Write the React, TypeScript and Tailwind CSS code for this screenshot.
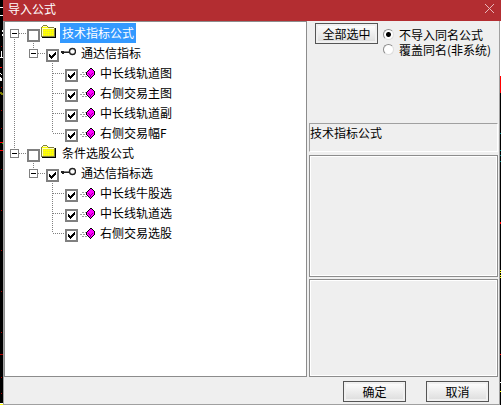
import React, { useState } from 'react';

type NodeKind = 'folder' | 'group' | 'formula';

interface TreeRow {
  id: string;
  label: string;
  kind: NodeKind;
  checked: boolean;
  // guide lines drawn left of the checkbox, one per level
  guides: GuideType[];
}

type GuideType = 'none' | 'line' | 'tee' | 'end' | 'first' | 'last' | 'only';

const ROWS: TreeRow[] = [
  { id: 'tech', label: '技术指标公式', kind: 'folder', checked: false, guides: ['first'] },
  { id: 'tech-tdx', label: '通达信指标', kind: 'group', checked: true, guides: ['line', 'only'] },
  { id: 'tech-1', label: '中长线轨道图', kind: 'formula', checked: true, guides: ['line', 'none', 'tee'] },
  { id: 'tech-2', label: '右侧交易主图', kind: 'formula', checked: true, guides: ['line', 'none', 'tee'] },
  { id: 'tech-3', label: '中长线轨道副', kind: 'formula', checked: true, guides: ['line', 'none', 'tee'] },
  { id: 'tech-4', label: '右侧交易幅F', kind: 'formula', checked: true, guides: ['line', 'none', 'end'] },
  { id: 'cond', label: '条件选股公式', kind: 'folder', checked: false, guides: ['last'] },
  { id: 'cond-tdx', label: '通达信指标选', kind: 'group', checked: true, guides: ['none', 'only'] },
  { id: 'cond-1', label: '中长线牛股选', kind: 'formula', checked: true, guides: ['none', 'none', 'tee'] },
  { id: 'cond-2', label: '中长线轨道选', kind: 'formula', checked: true, guides: ['none', 'none', 'tee'] },
  { id: 'cond-3', label: '右侧交易选股', kind: 'formula', checked: true, guides: ['none', 'none', 'end'] },
];

function Guide({ type }: { type: GuideType }) {
  const isExpander = type === 'first' || type === 'last' || type === 'only';
  const isBranch = isExpander || type === 'tee' || type === 'end';
  const hasTop = type !== 'none' && type !== 'first';
  const hasBottom = type === 'line' || type === 'tee' || type === 'first';

  const drawing = (
    <svg
      width={isBranch ? 22 : 19}
      height="20"
      shapeRendering="crispEdges"
      stroke="#808080"
      fill="none"
      className="block shrink-0"
    >
      {hasTop && <path d="M9.5 0V10" strokeDasharray="1 1" />}
      {hasBottom && <path d="M9.5 10V20" strokeDasharray="1 1" />}
      {isBranch && <path d="M10 10.5H21" strokeDasharray="1 1" />}
      {isExpander && (
        <>
          <rect x="5.5" y="6.5" width="8" height="8" fill="#fff" />
          <path d="M7 10.5H12" stroke="#000" />
        </>
      )}
    </svg>
  );

  if (isExpander) {
    return (
      <button type="button" aria-label="折叠" className="shrink-0">
        {drawing}
      </button>
    );
  }
  return drawing;
}

function FolderIcon() {
  return (
    <svg width="16" height="16" shapeRendering="crispEdges" className="block shrink-0">
      <path d="M2 0H6V1H7V2H13V3H14V12H0V2H1V1H2Z" fill="#808040" />
      <path d="M2 1H6V2H7V3H13V11H1V2H2Z" fill="#ffff00" />
      <path d="M2 4.5H13M2 6.5H13M2 8.5H13M2 10.5H13" stroke="#e0e040" strokeDasharray="1 1" />
      <path d="M2 1H6V2H2ZM1 3H13V4H2V11H1Z" fill="#ffffc0" />
      <path d="M14 3H15V13H1V12H14Z" fill="#000" />
    </svg>
  );
}

function GroupIcon() {
  return (
    <svg width="16" height="16" fill="none" className="block shrink-0">
      <path d="M1 6H4V7H9V8H4V9H2V8H1Z" fill="#222" />
      <path d="M4 6.5H9" stroke="#888" />
      <circle cx="12.5" cy="6.5" r="3" stroke="#222" strokeWidth="1.4" />
    </svg>
  );
}

function FormulaIcon() {
  return (
    <svg width="16" height="16" shapeRendering="crispEdges" className="block shrink-0">
      <path d="M3 7.5H7M1 9.5H6M3 11.5H8" stroke="#a0a0a0" strokeDasharray="2 1" />
      <path
        d="M11 3H13V4H14V5H15V6H16V10H15V11H14V12H13V13H12V14H11V13H10V12H9V11H8V10H7V7H8V6H9V5H10V4H11Z"
        fill="#000"
      />
      <path d="M11 4H13V5H14V6H15V10H14V11H13V12H12V13H11V12H10V11H9V10H8V7H9V6H10V5H11Z" fill="#ff00ff" />
      <path d="M9 8H10V9H11V10H12V9H13V8H14V9H13V10H12V12H11V10H10V9H9Z" fill="#900090" />
    </svg>
  );
}

function NodeIcon({ kind }: { kind: NodeKind }) {
  if (kind === 'folder') return <FolderIcon />;
  if (kind === 'group') return <GroupIcon />;
  return <FormulaIcon />;
}

interface TreeItemProps {
  row: TreeRow;
  checked: boolean;
  selected: boolean;
  onToggle: () => void;
}

function TreeItem({ row, checked, selected, onToggle }: TreeItemProps) {
  return (
    <li className="flex h-5 items-center">
      {row.guides.map((type, i) => (
        <Guide key={i} type={type} />
      ))}
      <span className="mb-px mr-px grid shrink-0 self-end">
        <input
          type="checkbox"
          id={row.id}
          checked={checked}
          onChange={onToggle}
          className="col-start-1 row-start-1 size-[13px] appearance-none border-2 border-[#808080] bg-white"
        />
        {checked && (
          <svg width="13" height="13" shapeRendering="crispEdges" className="pointer-events-none col-start-1 row-start-1">
            <path d="M3 5H4V6H5V7H6V6H7V5H8V4H9V3H10V6H9V7H8V8H7V9H6V10H5V9H4V8H3Z" fill="#000" />
          </svg>
        )}
      </span>
      <NodeIcon kind={row.kind} />
      <label
        htmlFor={row.id}
        className={
          selected
            ? 'ml-[3px] whitespace-nowrap bg-[#3399ff] px-0.5 leading-5 text-white'
            : 'ml-[3px] whitespace-nowrap px-0.5 leading-5'
        }
      >
        {row.label}
      </label>
    </li>
  );
}

function ChartEdgeLeft() {
  return (
    <svg width="3" height="405" shapeRendering="crispEdges" className="block">
      <path d="M0 7h3v1H0zM0 15h3v1H0zM2 30h1v2H2zM2 34h1v2H2zM1 51h1v6h1v1H0v-1h1zM0 73h1v1H0zM1 74h1v1H1zM0 77h1v1h1v3H0zM0 403h3v1H0z" fill="#fff" />
      <path d="M0 67h2v1H0zM0 142h3v1H0zM0 150h3v1H0z" fill="#f00" />
      <path d="M1 46h1v1H1zM1 87h1v1H1zM1 110h1v1H1zM1 128h1v1H1zM1 169h1v1H1zM1 210h1v1H1zM1 250h1v1H1zM1 291h1v1H1zM1 332h1v1H1zM0 354h3v1H0zM1 377h1v1H1zM1 393h1v1H1z" fill="#b00000" />
      <path d="M0 92h2v1h1v2H1v-1H0z" fill="#808000" />
      <path d="M2 143h1v1H2z" fill="#0c0" />
      <path d="M0 404h3v1H0z" fill="#ff0" />
    </svg>
  );
}

function ChartEdgeRight() {
  return (
    <svg width="1" height="384" shapeRendering="crispEdges" className="block">
      <path d="M0 0h1v55H0zM0 361h1v1H0z" fill="#fff" />
      <path d="M0 55h1v17H0zM0 201h1v2H0zM0 333h1v1H0z" fill="#f00" />
      <path d="M0 112h1v1H0zM0 129h1v1H0zM0 134h1v1H0zM0 140h1v1H0z" fill="#008080" />
      <path d="M0 249h1v1H0zM0 251h1v1H0zM0 254h1v1H0zM0 256h1v1H0zM0 370h1v1H0z" fill="#ff0" />
    </svg>
  );
}

function DialogButton({ children, onClick }: { children: React.ReactNode; onClick?: () => void }) {
  return (
    <button
      type="button"
      onClick={onClick}
      className="h-[21px] w-[63px] shrink-0 border border-[#555] bg-linear-to-b from-white to-[#dcdcdc] text-center leading-[19px] shadow-[inset_0_0_0_2px_#f0f0f0]"
    >
      {children}
    </button>
  );
}

const RADIO_CLASS =
  'size-[11px] shrink-0 appearance-none rounded-full border border-[#8c8c8c] border-r-[#dddddd] border-b-[#dddddd] bg-white checked:bg-[radial-gradient(circle,#000_2px,#fff_3px)]';

export default function App() {
  const [checked, setChecked] = useState<Record<string, boolean>>(
    Object.fromEntries(ROWS.map((row) => [row.id, row.checked]))
  );
  const [mode, setMode] = useState('skip');

  const toggle = (id: string) => setChecked((prev) => ({ ...prev, [id]: !prev[id] }));
  const selectAll = () => setChecked(Object.fromEntries(ROWS.map((row) => [row.id, true])));

  return (
    <div className="flex min-h-screen bg-black font-['Noto_Sans_CJK_SC',sans-serif] text-[12px] text-black">
      <div className="w-[3px] shrink-0">
        <ChartEdgeLeft />
      </div>
      <div className="flex min-w-0 flex-1 flex-col">
        <header className="flex h-[21px] items-start justify-between bg-[#b32d31] pl-[5px] pr-[7px] text-white">
          <h1 className="leading-[18px]">导入公式</h1>
          <button type="button" aria-label="关闭" className="pt-1">
            <svg width="9" height="9" stroke="#e8b8ba" className="block">
              <path d="M0 0L9 9M9 0L0 9" />
            </svg>
          </button>
        </header>
        <div className="flex flex-1">
          <div className="flex min-w-0 flex-1 flex-col border-x border-b border-[#a0a0a0] bg-[#efefef]">
            <main className="flex flex-1">
              <ul className="min-w-0 flex-1 border border-[#8c8c8c] bg-white pt-px">
                {ROWS.map((row) => (
                  <TreeItem
                    key={row.id}
                    row={row}
                    checked={checked[row.id]}
                    selected={row.id === 'tech'}
                    onToggle={() => toggle(row.id)}
                  />
                ))}
              </ul>
              <section className="flex w-[192px] shrink-0 flex-col pl-0.5 pr-px">
                <div className="flex h-[102px] items-start gap-[5px] pl-1.5 pt-0.5">
                  <DialogButton onClick={selectAll}>全部选中</DialogButton>
                  <div className="pt-1">
                    <label className="flex items-center gap-[5px] whitespace-nowrap leading-[15px]">
                      <input
                        type="radio"
                        name="mode"
                        checked={mode === 'skip'}
                        onChange={() => setMode('skip')}
                        className={RADIO_CLASS}
                      />
                      不导入同名公式
                    </label>
                    <label className="flex items-center gap-[5px] whitespace-nowrap leading-[15px]">
                      <input
                        type="radio"
                        name="mode"
                        checked={mode === 'overwrite'}
                        onChange={() => setMode('overwrite')}
                        className={RADIO_CLASS}
                      />
                      覆盖同名(非系统)
                    </label>
                  </div>
                </div>
                <p className="mb-[3px] h-[29px] border border-[#a0a0a0] border-r-white border-b-white leading-[18px]">
                  技术指标公式
                </p>
                <div className="mb-0.5 h-[122px] border border-[#8c8c8c] shadow-[inset_0_0_0_1px_#fff]" />
                <div className="min-h-[98px] flex-1 border border-[#8c8c8c] shadow-[inset_0_0_0_1px_#fff]" />
              </section>
            </main>
            <footer className="flex justify-end gap-5 pb-0.5 pr-2.5 pt-1">
              <DialogButton>确定</DialogButton>
              <DialogButton>取消</DialogButton>
            </footer>
          </div>
          <div className="w-px shrink-0">
            <ChartEdgeRight />
          </div>
        </div>
      </div>
    </div>
  );
}
